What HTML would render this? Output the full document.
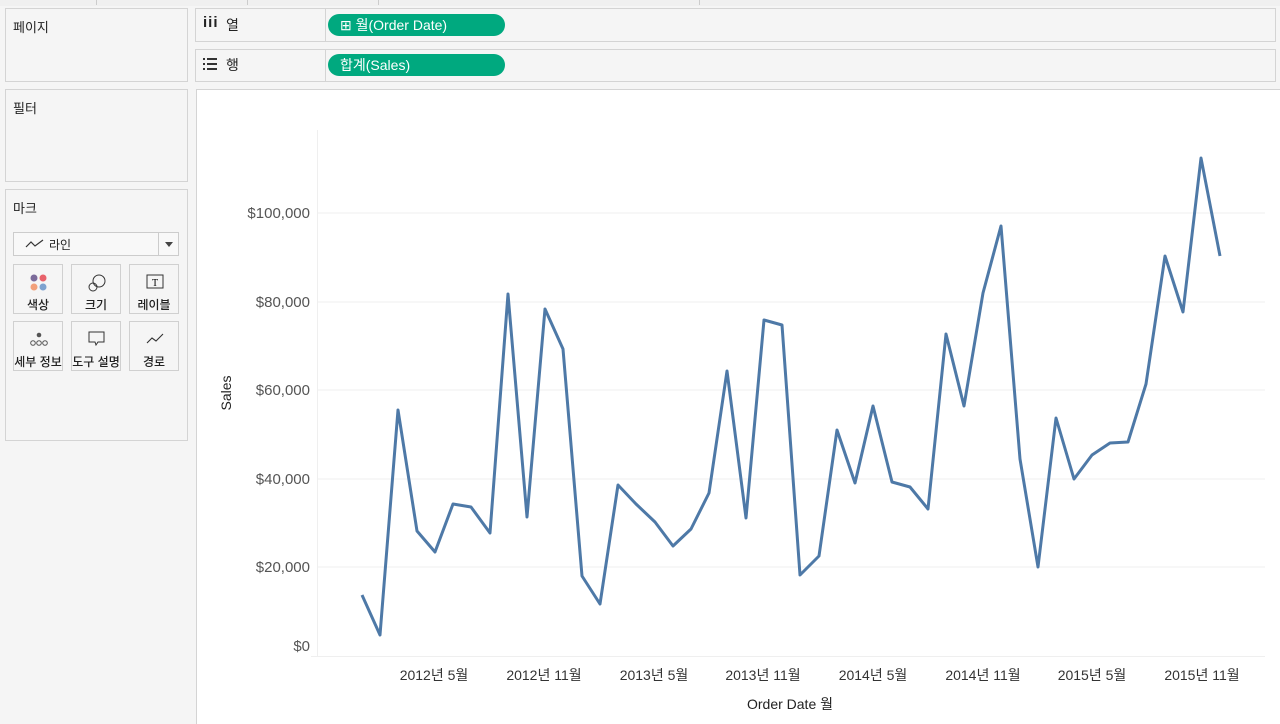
<!DOCTYPE html>
<html><head><meta charset="utf-8"><style>
body{margin:0;width:1280px;height:723px;background:#f5f5f5;font-family:"Liberation Sans","Noto Sans CJK KR",sans-serif;position:relative;overflow:hidden;font-size:13px;color:#222}
.box{position:absolute;background:#f5f5f5;border:1px solid #d4d4d4;box-sizing:border-box}
.t{position:absolute;font-size:13px;color:#222}
.pill{position:absolute;left:328px;width:177px;height:22px;border-radius:11px;background:#00a97f;color:#fff;font-size:14px;line-height:22px;box-sizing:border-box;padding-left:12px}
.card{position:absolute;width:50px;height:50px;border:1px solid #d0d0d0;background:#f5f5f5;box-sizing:border-box;font-size:12px;text-align:center;font-weight:500}
.card span{position:absolute;left:0;right:0;top:31px;white-space:nowrap}
.card svg{position:absolute;left:15px;top:8px}
</style></head><body>
<div style="position:absolute;left:0;top:0;width:1280px;height:6px;background:#f0f0f0"></div>
<div style="position:absolute;left:96px;top:0;width:1px;height:5px;background:#ccc"></div>
<div style="position:absolute;left:247px;top:0;width:1px;height:5px;background:#ccc"></div>
<div style="position:absolute;left:378px;top:0;width:1px;height:5px;background:#ccc"></div>
<div style="position:absolute;left:699px;top:0;width:1px;height:5px;background:#ccc"></div>

<div class="box" style="left:5px;top:8px;width:183px;height:74px"></div>
<div class="t" style="left:13px;top:17px">페이지</div>
<div class="box" style="left:5px;top:89px;width:183px;height:93px"></div>
<div class="t" style="left:13px;top:98px">필터</div>
<div class="box" style="left:5px;top:189px;width:183px;height:252px"></div>
<div class="t" style="left:13px;top:198px">마크</div>
<div style="position:absolute;left:13px;top:232px;width:166px;height:24px;border:1px solid #ccc;background:#f8f8f8;box-sizing:border-box"></div>
<svg style="position:absolute;left:25px;top:238px" width="20" height="12"><path d="M1 9 L6 4 L10 8 L18 2" fill="none" stroke="#333" stroke-width="1.2"/></svg>
<div class="t" style="left:49px;top:236px;font-size:12px">라인</div>
<div style="position:absolute;left:158px;top:233px;width:1px;height:22px;background:#ccc"></div>
<div style="position:absolute;left:165px;top:242px;border-left:4px solid transparent;border-right:4px solid transparent;border-top:5px solid #444"></div>
<div class="card" style="left:13px;top:264px"><svg width="20" height="20"><circle cx="5" cy="5" r="3.5" fill="#7b6a9a"/><circle cx="14" cy="5" r="3.5" fill="#e8626b"/><circle cx="5" cy="14" r="3.5" fill="#f2a07a"/><circle cx="14" cy="14" r="3.5" fill="#7ea2cf"/></svg><span>색상</span></div>
<div class="card" style="left:71px;top:264px"><svg width="20" height="20"><circle cx="12" cy="8" r="6" fill="none" stroke="#333"/><circle cx="6" cy="14" r="4" fill="none" stroke="#333"/></svg><span>크기</span></div>
<div class="card" style="left:129px;top:264px"><svg width="20" height="20"><rect x="2" y="2" width="16" height="13" fill="none" stroke="#333"/><text x="10" y="13" font-size="10" text-anchor="middle" font-family="Liberation Serif">T</text></svg><span>레이블</span></div>
<div class="card" style="left:13px;top:321px"><svg width="20" height="20"><circle cx="10" cy="5" r="2.3" fill="#555"/><circle cx="4" cy="13" r="2.3" fill="none" stroke="#555"/><circle cx="10" cy="13" r="2.3" fill="none" stroke="#555"/><circle cx="16" cy="13" r="2.3" fill="none" stroke="#555"/></svg><span>세부 정보</span></div>
<div class="card" style="left:71px;top:321px"><svg width="20" height="20"><path d="M2 2 H17 V12 H11 L9 15 L8 12 H2 Z" fill="none" stroke="#333"/></svg><span>도구 설명</span></div>
<div class="card" style="left:129px;top:321px"><svg width="20" height="20"><path d="M2 13 L7 8 L11 11 L18 4" fill="none" stroke="#333" stroke-width="1.1"/></svg><span>경로</span></div>

<div class="box" style="left:195px;top:8px;width:1081px;height:34px"></div>
<div style="position:absolute;left:325px;top:9px;width:1px;height:32px;background:#d4d4d4"></div>
<div class="t" style="left:203px;top:14px;font-weight:bold;font-size:15px;letter-spacing:1px">iii</div>
<div class="t" style="left:226px;top:15px;font-size:14px">열</div>
<div class="pill" style="top:14px">⊞ 월(Order Date)</div>
<div class="box" style="left:195px;top:49px;width:1081px;height:33px"></div>
<div style="position:absolute;left:325px;top:50px;width:1px;height:31px;background:#d4d4d4"></div>
<svg style="position:absolute;left:203px;top:58px" width="14" height="12"><g fill="#333"><rect x="0" y="0" width="2" height="2"/><rect x="0" y="5" width="2" height="2"/><rect x="0" y="10" width="2" height="2"/><rect x="4" y="0" width="10" height="2"/><rect x="4" y="5" width="10" height="2"/><rect x="4" y="10" width="10" height="2"/></g></svg>
<div class="t" style="left:226px;top:55px;font-size:14px">행</div>
<div class="pill" style="top:54px">합계(Sales)</div>

<div style="position:absolute;left:196px;top:89px;width:1084px;height:634px;background:#fff;border-left:1px solid #d4d4d4;border-top:1px solid #d4d4d4"></div>
<svg style="position:absolute;left:0;top:0" width="1280" height="723" font-family="Liberation Sans,Noto Sans CJK KR,sans-serif">
<g stroke="#efefef" stroke-width="1">
<line x1="318" y1="213" x2="1265" y2="213"/><line x1="318" y1="302" x2="1265" y2="302"/><line x1="318" y1="390" x2="1265" y2="390"/><line x1="318" y1="479" x2="1265" y2="479"/><line x1="318" y1="567" x2="1265" y2="567"/>
<line x1="317.5" y1="130" x2="317.5" y2="656"/><line x1="311" y1="656.5" x2="1265" y2="656.5"/>
</g>
<g fill="#555" font-size="15" text-anchor="end">
<text x="310" y="218">$100,000</text><text x="310" y="307">$80,000</text><text x="310" y="395">$60,000</text><text x="310" y="484">$40,000</text><text x="310" y="572">$20,000</text><text x="310" y="651">$0</text>
</g>
<g fill="#333" font-size="14" text-anchor="middle">
<text x="434" y="680">2012년 5월</text><text x="544" y="680">2012년 11월</text><text x="654" y="680">2013년 5월</text><text x="763" y="680">2013년 11월</text><text x="873" y="680">2014년 5월</text><text x="983" y="680">2014년 11월</text><text x="1092" y="680">2015년 5월</text><text x="1202" y="680">2015년 11월</text>
<text x="790" y="709" fill="#222">Order Date 월</text>
</g>
<text transform="translate(231,393) rotate(-90)" font-size="14" fill="#222" text-anchor="middle">Sales</text>
<polyline fill="none" stroke="#4e79a7" stroke-width="3" stroke-linejoin="round" points="362,595 380,635 398,410 417,531 435,552 453,504 471,507 490,533 508,294 527,517 545,309 563,349 582,576 600,604 618,485 636,504 655,522 673,546 691,529 709,493 727,371 746,518 764,320 782,325 800,575 819,556 837,430 855,483 873,406 892,482 910,487 928,509 946,334 964,406 983,293 1001,226 1020,459 1038,567 1056,418 1074,479 1092,455 1110,443 1128,442 1146,384 1165,256 1183,312 1201,158 1220,256"/>
</svg>
</body></html>
